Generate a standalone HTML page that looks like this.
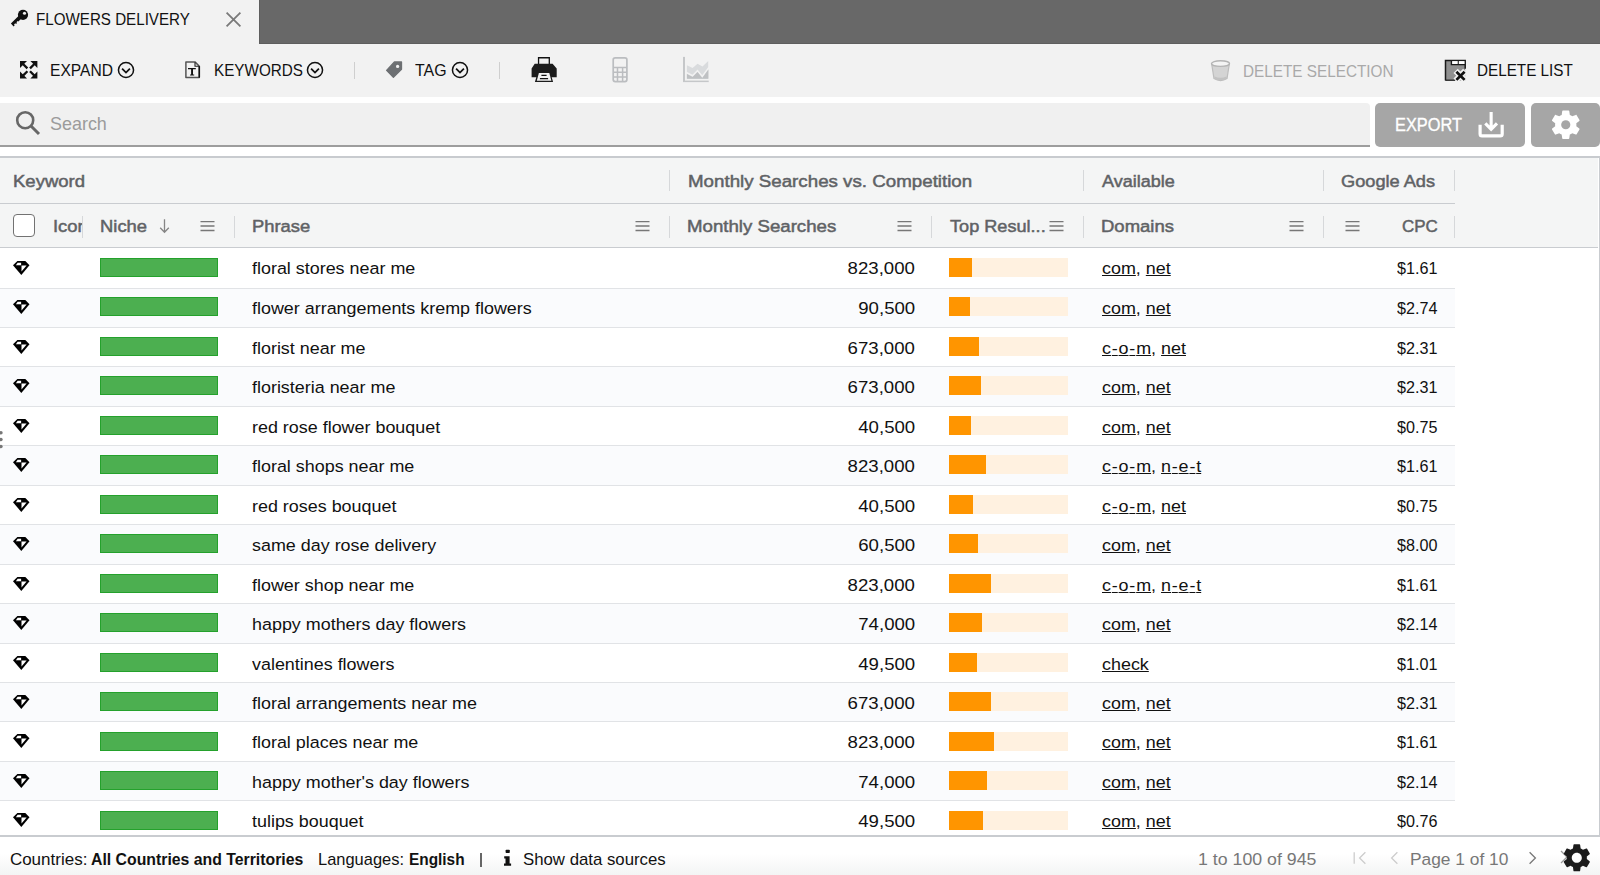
<!DOCTYPE html>
<html><head><meta charset="utf-8">
<style>
*{box-sizing:border-box;margin:0;padding:0}
html,body{width:1600px;height:875px;overflow:hidden;background:#fff;font-family:"Liberation Sans",sans-serif;}
.a{position:absolute}
.tl{white-space:nowrap;transform-origin:0 0;line-height:1}
u{text-decoration:underline;text-underline-offset:1.2px;text-decoration-thickness:1.2px}
.hy{margin:0 0.8px}
</style></head><body>
<div class="a" style="left:0px;top:0px;width:1600px;height:43.5px;background:#686868"></div>
<div class="a" style="left:259px;top:0px;width:1341px;height:43.5px;border-left:1.5px solid #5e5e5e;border-bottom:1.5px solid #5e5e5e"></div>
<div class="a" style="left:0px;top:0px;width:259px;height:43.5px;background:#f2f2f2"></div>
<svg class="a" style="left:10px;top:8px;" width="20" height="20" viewBox="0 0 20 20"><circle cx="13" cy="6.8" r="5.1" fill="#111"/><circle cx="14.5" cy="5.3" r="1.55" fill="#f2f2f2"/><path d="M9.5 7.0L0.9 15.6 3.6 18.4 4.7 17.3 4 16.6 5.3 15.3 6 16 7.1 14.9 6.4 14.2 7.7 12.9 8.4 13.6 12.5 9.5Z" fill="#111"/></svg>
<div class="a tl" style="left:36.30px;top:11.00px;font-size:17.2px;color:#111;font-weight:normal;transform:scaleX(0.882);">FLOWERS DELIVERY</div>
<svg class="a" style="left:225px;top:11px;" width="17" height="17" viewBox="0 0 17 17"><path d="M1.6 1.6 L15.4 15.4 M15.4 1.6 L1.6 15.4" stroke="#7a7a7a" stroke-width="1.8"/></svg>
<div class="a" style="left:0px;top:43.5px;width:1600px;height:53.5px;background:#f2f2f2"></div>
<svg class="a" style="left:20px;top:61px;" width="18" height="18" viewBox="0 0 18 18"><g fill="#111"><path d="M0 0H7L0 7Z"/><path d="M0 17.6H7L0 10.6Z"/><path d="M17.4 0H10.4L17.4 7Z"/><path d="M17.4 17.6H10.4L17.4 10.6Z"/></g><path d="M2 2L7.4 7.4M15.4 2L10 7.4M2 15.6L7.4 10.2M15.4 15.6L10 10.2" stroke="#111" stroke-width="2.3"/></svg>
<div class="a tl" style="left:50.30px;top:62.00px;font-size:17px;color:#111;font-weight:normal;transform:scaleX(0.918);">EXPAND</div>
<svg class="a" style="left:117.4px;top:60.7px;" width="18" height="18" viewBox="0 0 18 18"><circle cx="9" cy="9" r="7.55" fill="none" stroke="#111" stroke-width="1.5"/><path d="M5.1 7.7 L9 11.6 L12.9 7.7" fill="none" stroke="#111" stroke-width="1.8"/></svg>
<svg class="a" style="left:183px;top:60px;" width="19" height="20" viewBox="0 0 19 20"><path d="M2.9 2.1H12.2L16.3 6.2V17.6H2.9Z" fill="none" stroke="#555" stroke-width="1.5" stroke-linejoin="round"/><path d="M16.3 6.2V17.6" stroke="#111" stroke-width="1.5"/><path d="M12 2.3V6.3H16.1" fill="none" stroke="#222" stroke-width="1.1"/><path d="M5 8.1H12.8V9.3H12.2L11.9 9.2H10V14.6H11.2V15.6H7.1V14.6H8.1V9.2H6.1L5.6 9.3H5Z" fill="#111"/></svg>
<div class="a tl" style="left:213.50px;top:62.00px;font-size:17px;color:#111;font-weight:normal;transform:scaleX(0.897);">KEYWORDS</div>
<svg class="a" style="left:306.2px;top:60.7px;" width="18" height="18" viewBox="0 0 18 18"><circle cx="9" cy="9" r="7.55" fill="none" stroke="#111" stroke-width="1.5"/><path d="M5.1 7.7 L9 11.6 L12.9 7.7" fill="none" stroke="#111" stroke-width="1.8"/></svg>
<div class="a" style="left:353.6px;top:62px;width:1.2px;height:17px;background:#cfcfcf"></div>
<svg class="a" style="left:385px;top:60px;" width="19" height="20" viewBox="0 0 19 20"><path d="M9.4 2H16.5V9.3L8.4 17.2 1.6 10.4Z" fill="#6d7073" stroke="#6d7073" stroke-width="1.3" stroke-linejoin="round"/><circle cx="12.6" cy="6.4" r="1.6" fill="#f2f2f2"/></svg>
<div class="a tl" style="left:415.30px;top:62.00px;font-size:17px;color:#111;font-weight:normal;transform:scaleX(0.936);">TAG</div>
<svg class="a" style="left:450.8px;top:60.7px;" width="18" height="18" viewBox="0 0 18 18"><circle cx="9" cy="9" r="7.55" fill="none" stroke="#111" stroke-width="1.5"/><path d="M5.1 7.7 L9 11.6 L12.9 7.7" fill="none" stroke="#111" stroke-width="1.8"/></svg>
<div class="a" style="left:498.6px;top:62px;width:1.2px;height:17px;background:#cfcfcf"></div>
<svg class="a" style="left:530px;top:56px;" width="28" height="27" viewBox="0 0 28 27"><path d="M8.55 1.75H19.3V9H8.55Z" fill="#f2f2f2" stroke="#111" stroke-width="1.3"/><path d="M4.7 7.7H22.6L26.7 12.4V21.3H21.7L23.1 26H4.9L6.3 21.3H1.6V12.4Z" fill="#1c1c1c"/><path d="M8.9 17.1H19.3L21.4 24.8H6.8Z" fill="#f2f2f2"/><path d="M11.4 19.4H16.6M9.9 22.6H18.1" stroke="#111" stroke-width="1.1"/></svg>
<svg class="a" style="left:611px;top:56px;" width="18" height="28" viewBox="0 0 18 28"><rect x="2.2" y="1.9" width="13.7" height="23.7" rx="2" fill="none" stroke="#bbbdc0" stroke-width="1.7"/><path d="M2.2 11.4H15.9M6.5 11.4V25.6M11.6 11.4V25.6M2.2 16.3H15.9M2.2 21.1H15.9" stroke="#bbbdc0" stroke-width="1.5"/></svg>
<svg class="a" style="left:682px;top:56px;" width="28" height="28" viewBox="0 0 28 28"><path d="M4.9 9.2L10.6 12 15.5 7.7 20.5 10.4 26.2 4.9V22.8H4.9Z" fill="#d9dbdd"/><path d="M3.8 16.2L10.6 19.7 15.5 14.7 20.3 20.5 26.9 11.4" fill="none" stroke="#f2f2f2" stroke-width="1.6"/><path d="M4.9 17.9L10.6 21 15.5 16.1 20.3 22 26.4 13.4V22.8H4.9Z" fill="#bfc1c3"/><rect x="1" y="0.9" width="2" height="25.1" fill="#c5c7c9"/><rect x="1" y="24.6" width="25.7" height="1.5" fill="#c5c7c9"/></svg>
<svg class="a" style="left:1209px;top:59px;" width="23" height="23" viewBox="0 0 23 23"><path d="M2.6 4.5 L5 19.6 Q11.5 23.5 18 19.6 L20.4 4.5Z" fill="#d4d4d4" stroke="#bdbdbd" stroke-width="1.2"/><ellipse cx="11.5" cy="4.6" rx="9" ry="2.8" fill="#f4f4f4" stroke="#b4b4b4" stroke-width="1.4"/><path d="M5.3 17.5 Q11.5 20 17.7 17.5 L17.3 20 Q11.5 22.6 5.7 20Z" fill="#c2c2c2"/></svg>
<div class="a tl" style="left:1242.60px;top:63.00px;font-size:17px;color:#a9a9a9;font-weight:normal;transform:scaleX(0.9);">DELETE SELECTION</div>
<svg class="a" style="left:1443px;top:59px;" width="24" height="24" viewBox="0 0 24 24"><path d="M2.5 1.4H22.2V21.6H2.5Z" fill="#909090"/><path d="M2.5 21.6V1.4H22.2V9.8" fill="none" stroke="#1a1a1a" stroke-width="1.5"/><path d="M2.5 21.2H12" stroke="#1a1a1a" stroke-width="1.2"/><path d="M8.4 1.4V5.6H22" fill="none" stroke="#1a1a1a" stroke-width="1.3"/><rect x="9.2" y="2.1" width="5.8" height="2.9" fill="#fff"/><rect x="15.8" y="2.1" width="5.7" height="2.9" fill="#fff"/><path d="M15.2 5.6V2" stroke="#1a1a1a" stroke-width="0.9"/><path d="M12.6 11.9L22.2 21.5M22.2 11.9L12.6 21.5" stroke="#f2f2f2" stroke-width="6"/><path d="M13.4 12.7L21.6 20.9M21.6 12.7L13.4 20.9" stroke="#111" stroke-width="2.7"/></svg>
<div class="a tl" style="left:1477.30px;top:62.00px;font-size:17px;color:#111;font-weight:normal;transform:scaleX(0.897);">DELETE LIST</div>
<div class="a" style="left:0px;top:103px;width:1369.5px;height:44px;background:#f0f0f0;border-bottom:2px solid #9d9d9d;border-top-right-radius:4px"></div>
<svg class="a" style="left:14px;top:109px;" width="28" height="28" viewBox="0 0 28 28"><circle cx="11.2" cy="11.2" r="8" fill="none" stroke="#676767" stroke-width="2.6"/><path d="M17 17L25 25" stroke="#676767" stroke-width="3" /></svg>
<div class="a tl" style="left:50.10px;top:114.00px;font-size:19px;color:#9b9b9b;font-weight:normal;transform:scaleX(0.944);">Search</div>
<div class="a" style="left:1375.2px;top:103px;width:149.8px;height:43.5px;background:#a6a6a6;border-radius:5px"></div>
<div class="a tl" style="left:1395.20px;top:116.00px;font-size:18.9px;color:#fff;font-weight:normal;transform:scaleX(0.865);-webkit-text-stroke:0.35px #fff">EXPORT</div>
<svg class="a" style="left:1477px;top:110px;" width="29" height="29" viewBox="0 0 29 29"><path d="M3.1 14.7V23.9Q3.1 25.8 5 25.8H23.3Q25.2 25.8 25.2 23.9V14.7" fill="none" stroke="#fff" stroke-width="3.2"/><path d="M14.15 1.9V19.5M8.3 13.4L14.15 19.4 20 13.4" fill="none" stroke="#fff" stroke-width="3.1"/></svg>
<div class="a" style="left:1531px;top:103px;width:69px;height:43.5px;background:#a6a6a6;border-radius:5px"></div>
<svg class="a" style="left:1547.85px;top:106.85px;" width="35.5" height="35.5" viewBox="0 0 24 24"><path d="M19.14 12.94c.04-.3.06-.61.06-.94 0-.32-.02-.64-.07-.94l2.03-1.58c.18-.14.23-.41.12-.61l-1.92-3.32c-.12-.22-.37-.29-.59-.22l-2.39.96c-.5-.38-1.03-.7-1.62-.94l-.36-2.54c-.04-.24-.24-.41-.48-.41h-3.84c-.24 0-.43.17-.47.41l-.36 2.54c-.59.24-1.130.57-1.62.94l-2.39-.96c-.22-.08-.47 0-.59.22L2.74 8.87c-.12.21-.08.47.12.61l2.03 1.58c-.05.3-.09.63-.09.94s.02.64.07.94l-2.03 1.58c-.18.14-.23.41-.12.61l1.92 3.32c.12.22.37.29.59.22l2.39-.96c.5.38 1.030.7 1.62.94l.36 2.54c.05.24.24.41.48.41h3.84c.24 0 .44-.17.47-.41l.36-2.54c.59-.24 1.13-.56 1.62-.94l2.39.96c.22.08.47 0 .59-.22l1.92-3.32c.12-.22.07-.47-.12-.61l-2.01-1.58z" fill="#fff"/><circle cx="12" cy="12" r="3.1" fill="#a6a6a6"/></svg>
<div class="a" style="left:0px;top:156px;width:1599.5px;height:681px;border-top:2px solid #c8cbcf;border-right:1.5px solid #c9ccd0;border-bottom:2px solid #c9ccd0"></div>
<div class="a" style="left:0px;top:158px;width:1598px;height:89.7px;background:#f4f5f5;border-bottom:1.8px solid #c9ccd0"></div>
<div class="a" style="left:0px;top:203px;width:1455px;height:1px;background:#c9ccd0"></div>
<div class="a tl" style="left:12.50px;top:173.00px;font-size:17.4px;color:#5f6265;font-weight:normal;transform:scaleX(1.064);-webkit-text-stroke:0.5px #5f6265">Keyword</div>
<div class="a tl" style="left:687.50px;top:173.00px;font-size:17.4px;color:#5f6265;font-weight:normal;transform:scaleX(1.077);-webkit-text-stroke:0.5px #5f6265">Monthly Searches vs. Competition</div>
<div class="a tl" style="left:1102.20px;top:173.00px;font-size:17.4px;color:#5f6265;font-weight:normal;transform:scaleX(1.037);-webkit-text-stroke:0.5px #5f6265">Available</div>
<div class="a tl" style="left:1340.80px;top:173.00px;font-size:17.4px;color:#5f6265;font-weight:normal;transform:scaleX(1.046);-webkit-text-stroke:0.5px #5f6265">Google Ads</div>
<div class="a" style="left:669.1px;top:170px;width:1px;height:21px;background:#d6d8da"></div>
<div class="a" style="left:1083.3px;top:170px;width:1px;height:21px;background:#d6d8da"></div>
<div class="a" style="left:1322.5px;top:170px;width:1px;height:21px;background:#d6d8da"></div>
<div class="a" style="left:1453.7px;top:170px;width:1px;height:21px;background:#d6d8da"></div>
<div class="a" style="left:82.0px;top:216px;width:1px;height:21.5px;background:#d6d8da"></div>
<div class="a" style="left:233.9px;top:216px;width:1px;height:21.5px;background:#d6d8da"></div>
<div class="a" style="left:669.1px;top:216px;width:1px;height:21.5px;background:#d6d8da"></div>
<div class="a" style="left:931.2px;top:216px;width:1px;height:21.5px;background:#d6d8da"></div>
<div class="a" style="left:1083.3px;top:216px;width:1px;height:21.5px;background:#d6d8da"></div>
<div class="a" style="left:1322.5px;top:216px;width:1px;height:21.5px;background:#d6d8da"></div>
<div class="a" style="left:1453.7px;top:216px;width:1px;height:21.5px;background:#d6d8da"></div>
<div class="a" style="left:13px;top:214px;width:22px;height:22.6px;background:#fff;border:1.6px solid #727272;border-radius:4px"></div>
<div class="a" style="left:53px;top:205px;width:29px;height:40px;overflow:hidden"><div class="a tl" style="left:-0.30px;top:13.00px;font-size:17.4px;color:#5f6265;font-weight:normal;transform:scaleX(1.06);-webkit-text-stroke:0.5px #5f6265">Icon</div></div>
<div class="a tl" style="left:100.00px;top:218.00px;font-size:17.4px;color:#5f6265;font-weight:normal;transform:scaleX(1.058);-webkit-text-stroke:0.5px #5f6265">Niche</div>
<svg class="a" style="left:158px;top:218px;" width="13" height="16" viewBox="0 0 13 16"><path d="M6.5 1.2V14.2M2.2 9.8L6.5 14.2 10.8 9.8" fill="none" stroke="#858585" stroke-width="1.3"/></svg>
<svg class="a" style="left:199.5px;top:220px;" width="15" height="12" viewBox="0 0 15 12"><path d="M0.5 1.6H14.5M0.5 6H14.5M0.5 10.5H14.5" stroke="#777" stroke-width="1.3"/></svg>
<div class="a tl" style="left:251.60px;top:218.00px;font-size:17.4px;color:#5f6265;font-weight:normal;transform:scaleX(1.057);-webkit-text-stroke:0.5px #5f6265">Phrase</div>
<svg class="a" style="left:635px;top:220px;" width="15" height="12" viewBox="0 0 15 12"><path d="M0.5 1.6H14.5M0.5 6H14.5M0.5 10.5H14.5" stroke="#777" stroke-width="1.3"/></svg>
<div class="a tl" style="left:686.60px;top:218.00px;font-size:17.4px;color:#5f6265;font-weight:normal;transform:scaleX(1.072);-webkit-text-stroke:0.5px #5f6265">Monthly Searches</div>
<svg class="a" style="left:897px;top:220px;" width="15" height="12" viewBox="0 0 15 12"><path d="M0.5 1.6H14.5M0.5 6H14.5M0.5 10.5H14.5" stroke="#777" stroke-width="1.3"/></svg>
<div class="a tl" style="left:949.80px;top:218.00px;font-size:17.4px;color:#5f6265;font-weight:normal;transform:scaleX(1.042);-webkit-text-stroke:0.5px #5f6265">Top Resul...</div>
<svg class="a" style="left:1049px;top:220px;" width="15" height="12" viewBox="0 0 15 12"><path d="M0.5 1.6H14.5M0.5 6H14.5M0.5 10.5H14.5" stroke="#777" stroke-width="1.3"/></svg>
<div class="a tl" style="left:1100.90px;top:218.00px;font-size:17.4px;color:#5f6265;font-weight:normal;transform:scaleX(1.063);-webkit-text-stroke:0.5px #5f6265">Domains</div>
<svg class="a" style="left:1288.5px;top:220px;" width="15" height="12" viewBox="0 0 15 12"><path d="M0.5 1.6H14.5M0.5 6H14.5M0.5 10.5H14.5" stroke="#777" stroke-width="1.3"/></svg>
<svg class="a" style="left:1344.5px;top:220px;" width="15" height="12" viewBox="0 0 15 12"><path d="M0.5 1.6H14.5M0.5 6H14.5M0.5 10.5H14.5" stroke="#777" stroke-width="1.3"/></svg>
<div class="a tl" style="right:162.50px;top:218.00px;font-size:17.4px;color:#5f6265;font-weight:normal;transform:scaleX(0.975);transform-origin:100% 0;-webkit-text-stroke:0.5px #5f6265">CPC</div>
<div class="a" style="left:0px;top:249.17px;width:1455px;height:39.435px;background:#fff;border-bottom:1px solid #e1e3e6"></div>
<svg class="a" style="left:13px;top:260.60px;" width="16.5" height="14" viewBox="0 0 16.5 14"><path d="M4.4 0H12.3L16.5 4.3 8.3 14 0 4.3Z" fill="#000"/><path d="M4.6 1.7H8.1V4.2H2.9Z" fill="#fff"/><path d="M8.5 4.6H13.6L8.5 10.5Z" fill="#fff"/></svg>
<div class="a" style="left:100px;top:258.00px;width:118px;height:19px;background:#4caf50;border:1px solid #24a12c"></div>
<div class="a tl" style="left:252.40px;top:260.00px;font-size:17.4px;color:#111;font-weight:normal;transform:scaleX(1.03);">floral stores near me</div>
<div class="a tl" style="right:685.00px;top:260.00px;font-size:17.4px;color:#111;font-weight:normal;transform:scaleX(1.07);transform-origin:100% 0;">823,000</div>
<div class="a" style="left:949.2px;top:258.00px;width:118.6px;height:19px;background:#fff1e0"></div>
<div class="a" style="left:949.2px;top:258.00px;width:22.6px;height:19px;background:#ff9500"></div>
<div class="a tl" style="left:1101.50px;top:260.00px;font-size:17.4px;color:#111;font-weight:normal;transform:scaleX(1.03);"><u>com</u>, <u>net</u></div>
<div class="a tl" style="right:162.50px;top:260.00px;font-size:17.4px;color:#111;font-weight:normal;transform:scaleX(0.93);transform-origin:100% 0;">$1.61</div>
<div class="a" style="left:0px;top:288.61px;width:1455px;height:39.435px;background:#fafbfd;border-bottom:1px solid #e1e3e6"></div>
<svg class="a" style="left:13px;top:300.09px;" width="16.5" height="14" viewBox="0 0 16.5 14"><path d="M4.4 0H12.3L16.5 4.3 8.3 14 0 4.3Z" fill="#000"/><path d="M4.6 1.7H8.1V4.2H2.9Z" fill="#fff"/><path d="M8.5 4.6H13.6L8.5 10.5Z" fill="#fff"/></svg>
<div class="a" style="left:100px;top:297.49px;width:118px;height:19px;background:#4caf50;border:1px solid #24a12c"></div>
<div class="a tl" style="left:252.40px;top:300.00px;font-size:17.4px;color:#111;font-weight:normal;transform:scaleX(1.03);">flower arrangements kremp flowers</div>
<div class="a tl" style="right:685.00px;top:300.00px;font-size:17.4px;color:#111;font-weight:normal;transform:scaleX(1.07);transform-origin:100% 0;">90,500</div>
<div class="a" style="left:949.2px;top:297.49px;width:118.6px;height:19px;background:#fff1e0"></div>
<div class="a" style="left:949.2px;top:297.49px;width:21.3px;height:19px;background:#ff9500"></div>
<div class="a tl" style="left:1101.50px;top:300.00px;font-size:17.4px;color:#111;font-weight:normal;transform:scaleX(1.03);"><u>com</u>, <u>net</u></div>
<div class="a tl" style="right:162.50px;top:300.00px;font-size:17.4px;color:#111;font-weight:normal;transform:scaleX(0.93);transform-origin:100% 0;">$2.74</div>
<div class="a" style="left:0px;top:328.04px;width:1455px;height:39.435px;background:#fff;border-bottom:1px solid #e1e3e6"></div>
<svg class="a" style="left:13px;top:339.58px;" width="16.5" height="14" viewBox="0 0 16.5 14"><path d="M4.4 0H12.3L16.5 4.3 8.3 14 0 4.3Z" fill="#000"/><path d="M4.6 1.7H8.1V4.2H2.9Z" fill="#fff"/><path d="M8.5 4.6H13.6L8.5 10.5Z" fill="#fff"/></svg>
<div class="a" style="left:100px;top:336.98px;width:118px;height:19px;background:#4caf50;border:1px solid #24a12c"></div>
<div class="a tl" style="left:252.40px;top:340.00px;font-size:17.4px;color:#111;font-weight:normal;transform:scaleX(1.03);">florist near me</div>
<div class="a tl" style="right:685.00px;top:340.00px;font-size:17.4px;color:#111;font-weight:normal;transform:scaleX(1.07);transform-origin:100% 0;">673,000</div>
<div class="a" style="left:949.2px;top:336.98px;width:118.6px;height:19px;background:#fff1e0"></div>
<div class="a" style="left:949.2px;top:336.98px;width:29.9px;height:19px;background:#ff9500"></div>
<div class="a tl" style="left:1101.50px;top:340.00px;font-size:17.4px;color:#111;font-weight:normal;transform:scaleX(1.03);"><u>c<span class="hy">-</span>o<span class="hy">-</span>m</u>, <u>net</u></div>
<div class="a tl" style="right:162.50px;top:340.00px;font-size:17.4px;color:#111;font-weight:normal;transform:scaleX(0.93);transform-origin:100% 0;">$2.31</div>
<div class="a" style="left:0px;top:367.48px;width:1455px;height:39.435px;background:#fafbfd;border-bottom:1px solid #e1e3e6"></div>
<svg class="a" style="left:13px;top:379.07px;" width="16.5" height="14" viewBox="0 0 16.5 14"><path d="M4.4 0H12.3L16.5 4.3 8.3 14 0 4.3Z" fill="#000"/><path d="M4.6 1.7H8.1V4.2H2.9Z" fill="#fff"/><path d="M8.5 4.6H13.6L8.5 10.5Z" fill="#fff"/></svg>
<div class="a" style="left:100px;top:376.47px;width:118px;height:19px;background:#4caf50;border:1px solid #24a12c"></div>
<div class="a tl" style="left:252.40px;top:379.00px;font-size:17.4px;color:#111;font-weight:normal;transform:scaleX(1.03);">floristeria near me</div>
<div class="a tl" style="right:685.00px;top:379.00px;font-size:17.4px;color:#111;font-weight:normal;transform:scaleX(1.07);transform-origin:100% 0;">673,000</div>
<div class="a" style="left:949.2px;top:376.47px;width:118.6px;height:19px;background:#fff1e0"></div>
<div class="a" style="left:949.2px;top:376.47px;width:31.9px;height:19px;background:#ff9500"></div>
<div class="a tl" style="left:1101.50px;top:379.00px;font-size:17.4px;color:#111;font-weight:normal;transform:scaleX(1.03);"><u>com</u>, <u>net</u></div>
<div class="a tl" style="right:162.50px;top:379.00px;font-size:17.4px;color:#111;font-weight:normal;transform:scaleX(0.93);transform-origin:100% 0;">$2.31</div>
<div class="a" style="left:0px;top:406.91px;width:1455px;height:39.435px;background:#fff;border-bottom:1px solid #e1e3e6"></div>
<svg class="a" style="left:13px;top:418.56px;" width="16.5" height="14" viewBox="0 0 16.5 14"><path d="M4.4 0H12.3L16.5 4.3 8.3 14 0 4.3Z" fill="#000"/><path d="M4.6 1.7H8.1V4.2H2.9Z" fill="#fff"/><path d="M8.5 4.6H13.6L8.5 10.5Z" fill="#fff"/></svg>
<div class="a" style="left:100px;top:415.96px;width:118px;height:19px;background:#4caf50;border:1px solid #24a12c"></div>
<div class="a tl" style="left:252.40px;top:419.00px;font-size:17.4px;color:#111;font-weight:normal;transform:scaleX(1.03);">red rose flower bouquet</div>
<div class="a tl" style="right:685.00px;top:419.00px;font-size:17.4px;color:#111;font-weight:normal;transform:scaleX(1.07);transform-origin:100% 0;">40,500</div>
<div class="a" style="left:949.2px;top:415.96px;width:118.6px;height:19px;background:#fff1e0"></div>
<div class="a" style="left:949.2px;top:415.96px;width:22.0px;height:19px;background:#ff9500"></div>
<div class="a tl" style="left:1101.50px;top:419.00px;font-size:17.4px;color:#111;font-weight:normal;transform:scaleX(1.03);"><u>com</u>, <u>net</u></div>
<div class="a tl" style="right:162.50px;top:419.00px;font-size:17.4px;color:#111;font-weight:normal;transform:scaleX(0.93);transform-origin:100% 0;">$0.75</div>
<div class="a" style="left:0px;top:446.35px;width:1455px;height:39.435px;background:#fafbfd;border-bottom:1px solid #e1e3e6"></div>
<svg class="a" style="left:13px;top:458.05px;" width="16.5" height="14" viewBox="0 0 16.5 14"><path d="M4.4 0H12.3L16.5 4.3 8.3 14 0 4.3Z" fill="#000"/><path d="M4.6 1.7H8.1V4.2H2.9Z" fill="#fff"/><path d="M8.5 4.6H13.6L8.5 10.5Z" fill="#fff"/></svg>
<div class="a" style="left:100px;top:455.45px;width:118px;height:19px;background:#4caf50;border:1px solid #24a12c"></div>
<div class="a tl" style="left:252.40px;top:458.00px;font-size:17.4px;color:#111;font-weight:normal;transform:scaleX(1.03);">floral shops near me</div>
<div class="a tl" style="right:685.00px;top:458.00px;font-size:17.4px;color:#111;font-weight:normal;transform:scaleX(1.07);transform-origin:100% 0;">823,000</div>
<div class="a" style="left:949.2px;top:455.45px;width:118.6px;height:19px;background:#fff1e0"></div>
<div class="a" style="left:949.2px;top:455.45px;width:37.2px;height:19px;background:#ff9500"></div>
<div class="a tl" style="left:1101.50px;top:458.00px;font-size:17.4px;color:#111;font-weight:normal;transform:scaleX(1.03);"><u>c<span class="hy">-</span>o<span class="hy">-</span>m</u>, <u>n<span class="hy">-</span>e<span class="hy">-</span>t</u></div>
<div class="a tl" style="right:162.50px;top:458.00px;font-size:17.4px;color:#111;font-weight:normal;transform:scaleX(0.93);transform-origin:100% 0;">$1.61</div>
<div class="a" style="left:0px;top:485.78px;width:1455px;height:39.435px;background:#fff;border-bottom:1px solid #e1e3e6"></div>
<svg class="a" style="left:13px;top:497.54px;" width="16.5" height="14" viewBox="0 0 16.5 14"><path d="M4.4 0H12.3L16.5 4.3 8.3 14 0 4.3Z" fill="#000"/><path d="M4.6 1.7H8.1V4.2H2.9Z" fill="#fff"/><path d="M8.5 4.6H13.6L8.5 10.5Z" fill="#fff"/></svg>
<div class="a" style="left:100px;top:494.94px;width:118px;height:19px;background:#4caf50;border:1px solid #24a12c"></div>
<div class="a tl" style="left:252.40px;top:498.00px;font-size:17.4px;color:#111;font-weight:normal;transform:scaleX(1.03);">red roses bouquet</div>
<div class="a tl" style="right:685.00px;top:498.00px;font-size:17.4px;color:#111;font-weight:normal;transform:scaleX(1.07);transform-origin:100% 0;">40,500</div>
<div class="a" style="left:949.2px;top:494.94px;width:118.6px;height:19px;background:#fff1e0"></div>
<div class="a" style="left:949.2px;top:494.94px;width:23.9px;height:19px;background:#ff9500"></div>
<div class="a tl" style="left:1101.50px;top:498.00px;font-size:17.4px;color:#111;font-weight:normal;transform:scaleX(1.03);"><u>c<span class="hy">-</span>o<span class="hy">-</span>m</u>, <u>net</u></div>
<div class="a tl" style="right:162.50px;top:498.00px;font-size:17.4px;color:#111;font-weight:normal;transform:scaleX(0.93);transform-origin:100% 0;">$0.75</div>
<div class="a" style="left:0px;top:525.22px;width:1455px;height:39.435px;background:#fafbfd;border-bottom:1px solid #e1e3e6"></div>
<svg class="a" style="left:13px;top:537.03px;" width="16.5" height="14" viewBox="0 0 16.5 14"><path d="M4.4 0H12.3L16.5 4.3 8.3 14 0 4.3Z" fill="#000"/><path d="M4.6 1.7H8.1V4.2H2.9Z" fill="#fff"/><path d="M8.5 4.6H13.6L8.5 10.5Z" fill="#fff"/></svg>
<div class="a" style="left:100px;top:534.43px;width:118px;height:19px;background:#4caf50;border:1px solid #24a12c"></div>
<div class="a tl" style="left:252.40px;top:537.00px;font-size:17.4px;color:#111;font-weight:normal;transform:scaleX(1.03);">same day rose delivery</div>
<div class="a tl" style="right:685.00px;top:537.00px;font-size:17.4px;color:#111;font-weight:normal;transform:scaleX(1.07);transform-origin:100% 0;">60,500</div>
<div class="a" style="left:949.2px;top:534.43px;width:118.6px;height:19px;background:#fff1e0"></div>
<div class="a" style="left:949.2px;top:534.43px;width:28.9px;height:19px;background:#ff9500"></div>
<div class="a tl" style="left:1101.50px;top:537.00px;font-size:17.4px;color:#111;font-weight:normal;transform:scaleX(1.03);"><u>com</u>, <u>net</u></div>
<div class="a tl" style="right:162.50px;top:537.00px;font-size:17.4px;color:#111;font-weight:normal;transform:scaleX(0.93);transform-origin:100% 0;">$8.00</div>
<div class="a" style="left:0px;top:564.65px;width:1455px;height:39.435px;background:#fff;border-bottom:1px solid #e1e3e6"></div>
<svg class="a" style="left:13px;top:576.52px;" width="16.5" height="14" viewBox="0 0 16.5 14"><path d="M4.4 0H12.3L16.5 4.3 8.3 14 0 4.3Z" fill="#000"/><path d="M4.6 1.7H8.1V4.2H2.9Z" fill="#fff"/><path d="M8.5 4.6H13.6L8.5 10.5Z" fill="#fff"/></svg>
<div class="a" style="left:100px;top:573.92px;width:118px;height:19px;background:#4caf50;border:1px solid #24a12c"></div>
<div class="a tl" style="left:252.40px;top:577.00px;font-size:17.4px;color:#111;font-weight:normal;transform:scaleX(1.03);">flower shop near me</div>
<div class="a tl" style="right:685.00px;top:577.00px;font-size:17.4px;color:#111;font-weight:normal;transform:scaleX(1.07);transform-origin:100% 0;">823,000</div>
<div class="a" style="left:949.2px;top:573.92px;width:118.6px;height:19px;background:#fff1e0"></div>
<div class="a" style="left:949.2px;top:573.92px;width:41.5px;height:19px;background:#ff9500"></div>
<div class="a tl" style="left:1101.50px;top:577.00px;font-size:17.4px;color:#111;font-weight:normal;transform:scaleX(1.03);"><u>c<span class="hy">-</span>o<span class="hy">-</span>m</u>, <u>n<span class="hy">-</span>e<span class="hy">-</span>t</u></div>
<div class="a tl" style="right:162.50px;top:577.00px;font-size:17.4px;color:#111;font-weight:normal;transform:scaleX(0.93);transform-origin:100% 0;">$1.61</div>
<div class="a" style="left:0px;top:604.09px;width:1455px;height:39.435px;background:#fafbfd;border-bottom:1px solid #e1e3e6"></div>
<svg class="a" style="left:13px;top:616.01px;" width="16.5" height="14" viewBox="0 0 16.5 14"><path d="M4.4 0H12.3L16.5 4.3 8.3 14 0 4.3Z" fill="#000"/><path d="M4.6 1.7H8.1V4.2H2.9Z" fill="#fff"/><path d="M8.5 4.6H13.6L8.5 10.5Z" fill="#fff"/></svg>
<div class="a" style="left:100px;top:613.41px;width:118px;height:19px;background:#4caf50;border:1px solid #24a12c"></div>
<div class="a tl" style="left:252.40px;top:616.00px;font-size:17.4px;color:#111;font-weight:normal;transform:scaleX(1.03);">happy mothers day flowers</div>
<div class="a tl" style="right:685.00px;top:616.00px;font-size:17.4px;color:#111;font-weight:normal;transform:scaleX(1.07);transform-origin:100% 0;">74,000</div>
<div class="a" style="left:949.2px;top:613.41px;width:118.6px;height:19px;background:#fff1e0"></div>
<div class="a" style="left:949.2px;top:613.41px;width:32.8px;height:19px;background:#ff9500"></div>
<div class="a tl" style="left:1101.50px;top:616.00px;font-size:17.4px;color:#111;font-weight:normal;transform:scaleX(1.03);"><u>com</u>, <u>net</u></div>
<div class="a tl" style="right:162.50px;top:616.00px;font-size:17.4px;color:#111;font-weight:normal;transform:scaleX(0.93);transform-origin:100% 0;">$2.14</div>
<div class="a" style="left:0px;top:643.52px;width:1455px;height:39.435px;background:#fff;border-bottom:1px solid #e1e3e6"></div>
<svg class="a" style="left:13px;top:655.50px;" width="16.5" height="14" viewBox="0 0 16.5 14"><path d="M4.4 0H12.3L16.5 4.3 8.3 14 0 4.3Z" fill="#000"/><path d="M4.6 1.7H8.1V4.2H2.9Z" fill="#fff"/><path d="M8.5 4.6H13.6L8.5 10.5Z" fill="#fff"/></svg>
<div class="a" style="left:100px;top:652.90px;width:118px;height:19px;background:#4caf50;border:1px solid #24a12c"></div>
<div class="a tl" style="left:252.40px;top:656.00px;font-size:17.4px;color:#111;font-weight:normal;transform:scaleX(1.03);">valentines flowers</div>
<div class="a tl" style="right:685.00px;top:656.00px;font-size:17.4px;color:#111;font-weight:normal;transform:scaleX(1.07);transform-origin:100% 0;">49,500</div>
<div class="a" style="left:949.2px;top:652.90px;width:118.6px;height:19px;background:#fff1e0"></div>
<div class="a" style="left:949.2px;top:652.90px;width:28.2px;height:19px;background:#ff9500"></div>
<div class="a tl" style="left:1101.50px;top:656.00px;font-size:17.4px;color:#111;font-weight:normal;transform:scaleX(1.03);"><u>check</u></div>
<div class="a tl" style="right:162.50px;top:656.00px;font-size:17.4px;color:#111;font-weight:normal;transform:scaleX(0.93);transform-origin:100% 0;">$1.01</div>
<div class="a" style="left:0px;top:682.96px;width:1455px;height:39.435px;background:#fafbfd;border-bottom:1px solid #e1e3e6"></div>
<svg class="a" style="left:13px;top:694.99px;" width="16.5" height="14" viewBox="0 0 16.5 14"><path d="M4.4 0H12.3L16.5 4.3 8.3 14 0 4.3Z" fill="#000"/><path d="M4.6 1.7H8.1V4.2H2.9Z" fill="#fff"/><path d="M8.5 4.6H13.6L8.5 10.5Z" fill="#fff"/></svg>
<div class="a" style="left:100px;top:692.39px;width:118px;height:19px;background:#4caf50;border:1px solid #24a12c"></div>
<div class="a tl" style="left:252.40px;top:695.00px;font-size:17.4px;color:#111;font-weight:normal;transform:scaleX(1.03);">floral arrangements near me</div>
<div class="a tl" style="right:685.00px;top:695.00px;font-size:17.4px;color:#111;font-weight:normal;transform:scaleX(1.07);transform-origin:100% 0;">673,000</div>
<div class="a" style="left:949.2px;top:692.39px;width:118.6px;height:19px;background:#fff1e0"></div>
<div class="a" style="left:949.2px;top:692.39px;width:42.2px;height:19px;background:#ff9500"></div>
<div class="a tl" style="left:1101.50px;top:695.00px;font-size:17.4px;color:#111;font-weight:normal;transform:scaleX(1.03);"><u>com</u>, <u>net</u></div>
<div class="a tl" style="right:162.50px;top:695.00px;font-size:17.4px;color:#111;font-weight:normal;transform:scaleX(0.93);transform-origin:100% 0;">$2.31</div>
<div class="a" style="left:0px;top:722.39px;width:1455px;height:39.435px;background:#fff;border-bottom:1px solid #e1e3e6"></div>
<svg class="a" style="left:13px;top:734.48px;" width="16.5" height="14" viewBox="0 0 16.5 14"><path d="M4.4 0H12.3L16.5 4.3 8.3 14 0 4.3Z" fill="#000"/><path d="M4.6 1.7H8.1V4.2H2.9Z" fill="#fff"/><path d="M8.5 4.6H13.6L8.5 10.5Z" fill="#fff"/></svg>
<div class="a" style="left:100px;top:731.88px;width:118px;height:19px;background:#4caf50;border:1px solid #24a12c"></div>
<div class="a tl" style="left:252.40px;top:734.00px;font-size:17.4px;color:#111;font-weight:normal;transform:scaleX(1.03);">floral places near me</div>
<div class="a tl" style="right:685.00px;top:734.00px;font-size:17.4px;color:#111;font-weight:normal;transform:scaleX(1.07);transform-origin:100% 0;">823,000</div>
<div class="a" style="left:949.2px;top:731.88px;width:118.6px;height:19px;background:#fff1e0"></div>
<div class="a" style="left:949.2px;top:731.88px;width:45.1px;height:19px;background:#ff9500"></div>
<div class="a tl" style="left:1101.50px;top:734.00px;font-size:17.4px;color:#111;font-weight:normal;transform:scaleX(1.03);"><u>com</u>, <u>net</u></div>
<div class="a tl" style="right:162.50px;top:734.00px;font-size:17.4px;color:#111;font-weight:normal;transform:scaleX(0.93);transform-origin:100% 0;">$1.61</div>
<div class="a" style="left:0px;top:761.82px;width:1455px;height:39.435px;background:#fafbfd;border-bottom:1px solid #e1e3e6"></div>
<svg class="a" style="left:13px;top:773.97px;" width="16.5" height="14" viewBox="0 0 16.5 14"><path d="M4.4 0H12.3L16.5 4.3 8.3 14 0 4.3Z" fill="#000"/><path d="M4.6 1.7H8.1V4.2H2.9Z" fill="#fff"/><path d="M8.5 4.6H13.6L8.5 10.5Z" fill="#fff"/></svg>
<div class="a" style="left:100px;top:771.37px;width:118px;height:19px;background:#4caf50;border:1px solid #24a12c"></div>
<div class="a tl" style="left:252.40px;top:774.00px;font-size:17.4px;color:#111;font-weight:normal;transform:scaleX(1.03);">happy mother's day flowers</div>
<div class="a tl" style="right:685.00px;top:774.00px;font-size:17.4px;color:#111;font-weight:normal;transform:scaleX(1.07);transform-origin:100% 0;">74,000</div>
<div class="a" style="left:949.2px;top:771.37px;width:118.6px;height:19px;background:#fff1e0"></div>
<div class="a" style="left:949.2px;top:771.37px;width:38.2px;height:19px;background:#ff9500"></div>
<div class="a tl" style="left:1101.50px;top:774.00px;font-size:17.4px;color:#111;font-weight:normal;transform:scaleX(1.03);"><u>com</u>, <u>net</u></div>
<div class="a tl" style="right:162.50px;top:774.00px;font-size:17.4px;color:#111;font-weight:normal;transform:scaleX(0.93);transform-origin:100% 0;">$2.14</div>
<div class="a" style="left:0px;top:801.26px;width:1455px;height:39.435px;background:#fff;border-bottom:1px solid #e1e3e6"></div>
<svg class="a" style="left:13px;top:813.46px;" width="16.5" height="14" viewBox="0 0 16.5 14"><path d="M4.4 0H12.3L16.5 4.3 8.3 14 0 4.3Z" fill="#000"/><path d="M4.6 1.7H8.1V4.2H2.9Z" fill="#fff"/><path d="M8.5 4.6H13.6L8.5 10.5Z" fill="#fff"/></svg>
<div class="a" style="left:100px;top:810.86px;width:118px;height:19px;background:#4caf50;border:1px solid #24a12c"></div>
<div class="a tl" style="left:252.40px;top:813.00px;font-size:17.4px;color:#111;font-weight:normal;transform:scaleX(1.03);">tulips bouquet</div>
<div class="a tl" style="right:685.00px;top:813.00px;font-size:17.4px;color:#111;font-weight:normal;transform:scaleX(1.07);transform-origin:100% 0;">49,500</div>
<div class="a" style="left:949.2px;top:810.86px;width:118.6px;height:19px;background:#fff1e0"></div>
<div class="a" style="left:949.2px;top:810.86px;width:33.9px;height:19px;background:#ff9500"></div>
<div class="a tl" style="left:1101.50px;top:813.00px;font-size:17.4px;color:#111;font-weight:normal;transform:scaleX(1.03);"><u>com</u>, <u>net</u></div>
<div class="a tl" style="right:162.50px;top:813.00px;font-size:17.4px;color:#111;font-weight:normal;transform:scaleX(0.93);transform-origin:100% 0;">$0.76</div>
<svg class="a" style="left:0px;top:430px;" width="4" height="19" viewBox="0 0 4 19"><circle cx="1" cy="2.7" r="1.7" fill="#777"/><circle cx="1" cy="9.5" r="1.7" fill="#777"/><circle cx="1" cy="16.5" r="1.7" fill="#777"/></svg>
<div class="a" style="left:0px;top:837px;width:1600px;height:38px;background:linear-gradient(#fff 45%,#f3f4f4)"></div>
<div class="a" style="left:0px;top:835.3px;width:1599.5px;height:1.6px;background:#c9ccd0"></div>
<div class="a tl" style="left:9.90px;top:851.00px;font-size:17px;color:#111;font-weight:normal;transform:scaleX(1.0);">Countries:</div>
<div class="a tl" style="left:91.00px;top:851.00px;font-size:17px;color:#111;font-weight:bold;transform:scaleX(0.93);">All Countries and Territories</div>
<div class="a tl" style="left:318.00px;top:851.00px;font-size:17px;color:#111;font-weight:normal;transform:scaleX(0.968);">Languages:</div>
<div class="a tl" style="left:408.80px;top:851.00px;font-size:17px;color:#111;font-weight:bold;transform:scaleX(0.905);">English</div>
<div class="a" style="left:480.3px;top:852.7px;width:1.3px;height:14.2px;background:#666"></div>
<svg class="a" style="left:502px;top:849px;" width="11" height="18" viewBox="0 0 11 18"><rect x="3.6" y="0.8" width="4.2" height="3.3" rx="0.8" fill="#111"/><path d="M2.2 7.2H7.6V14.6H9.1V16.8H2V14.6H3.5V9.4H2.2Z" fill="#111"/></svg>
<div class="a tl" style="left:523.00px;top:851.00px;font-size:17px;color:#111;font-weight:normal;transform:scaleX(0.987);">Show data sources</div>
<div class="a tl" style="left:1197.50px;top:851.00px;font-size:17.4px;color:#777;font-weight:normal;transform:scaleX(1.02);">1 to 100 of 945</div>
<svg class="a" style="left:1352px;top:850px;" width="16" height="16" viewBox="0 0 16 16"><path d="M2.2 2.2V13.8M13.4 2.2L7.6 8 13.4 13.8" fill="none" stroke="#cdcdcd" stroke-width="1.3"/></svg>
<svg class="a" style="left:1389px;top:850px;" width="11" height="16" viewBox="0 0 11 16"><path d="M8.4 2.2L2.6 8 8.4 13.8" fill="none" stroke="#cdcdcd" stroke-width="1.3"/></svg>
<div class="a tl" style="left:1410.00px;top:851.00px;font-size:17.4px;color:#777;font-weight:normal;transform:scaleX(0.997);">Page 1 of 10</div>
<svg class="a" style="left:1527px;top:850px;" width="11" height="16" viewBox="0 0 11 16"><path d="M2.6 2.2L8.4 8 2.6 13.8" fill="none" stroke="#777" stroke-width="1.3"/></svg>
<svg class="a" style="left:1559px;top:849px;" width="16" height="16" viewBox="0 0 16 16"><path d="M2 2L14 14M14 2L2 14" stroke="#999" stroke-width="1.3"/></svg>
<svg class="a" style="left:1560.1px;top:840.8px;" width="33.6" height="33.6" viewBox="0 0 24 24"><path d="M19.14 12.94c.04-.3.06-.61.06-.94 0-.32-.02-.64-.07-.94l2.03-1.58c.18-.14.23-.41.12-.61l-1.92-3.32c-.12-.22-.37-.29-.59-.22l-2.39.96c-.5-.38-1.03-.7-1.62-.94l-.36-2.54c-.04-.24-.24-.41-.48-.41h-3.84c-.24 0-.43.17-.47.41l-.36 2.54c-.59.24-1.130.57-1.62.94l-2.39-.96c-.22-.08-.47 0-.59.22L2.74 8.87c-.12.21-.08.47.12.61l2.03 1.58c-.05.3-.09.63-.09.94s.02.64.07.94l-2.03 1.58c-.18.14-.23.41-.12.61l1.92 3.32c.12.22.37.29.59.22l2.39-.96c.5.38 1.030.7 1.62.94l.36 2.54c.05.24.24.41.48.41h3.84c.24 0 .44-.17.47-.41l.36-2.54c.59-.24 1.13-.56 1.62-.94l2.39.96c.22.08.47 0 .59-.22l1.92-3.32c.12-.22.07-.47-.12-.61l-2.01-1.58zM12 15.6c-1.98 0-3.6-1.62-3.6-3.6s1.62-3.6 3.6-3.6 3.6 1.62 3.6 3.6-1.62 3.6-3.6 3.6z" fill="#1b1b1b"/></svg>
</body></html>
